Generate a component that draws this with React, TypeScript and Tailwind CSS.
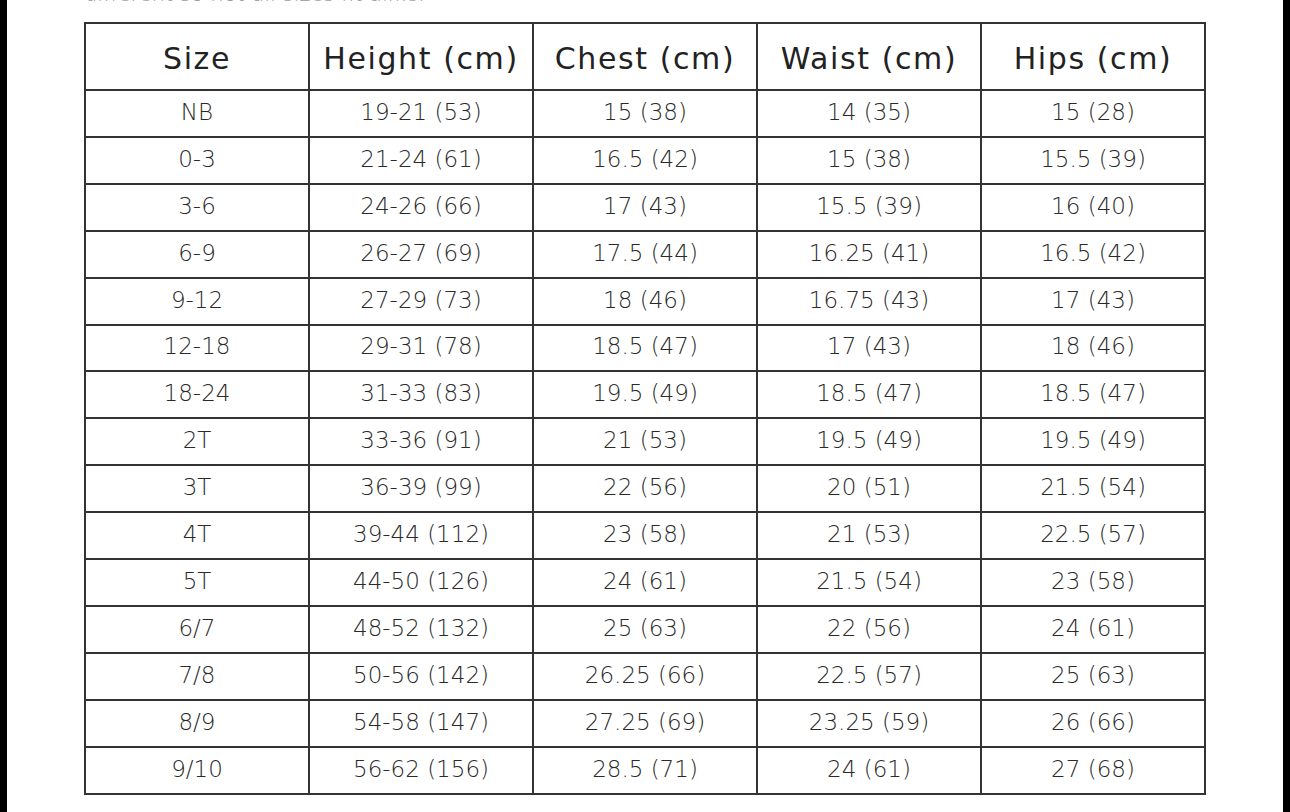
import React from "react";

const headers = ["Size", "Height (cm)", "Chest (cm)", "Waist (cm)", "Hips (cm)"];
const rows: string[][] = [
  ["NB", "19-21 (53)", "15 (38)", "14 (35)", "15 (28)"],
  ["0-3", "21-24 (61)", "16.5 (42)", "15 (38)", "15.5 (39)"],
  ["3-6", "24-26 (66)", "17 (43)", "15.5 (39)", "16 (40)"],
  ["6-9", "26-27 (69)", "17.5 (44)", "16.25 (41)", "16.5 (42)"],
  ["9-12", "27-29 (73)", "18 (46)", "16.75 (43)", "17 (43)"],
  ["12-18", "29-31 (78)", "18.5 (47)", "17 (43)", "18 (46)"],
  ["18-24", "31-33 (83)", "19.5 (49)", "18.5 (47)", "18.5 (47)"],
  ["2T", "33-36 (91)", "21 (53)", "19.5 (49)", "19.5 (49)"],
  ["3T", "36-39 (99)", "22 (56)", "20 (51)", "21.5 (54)"],
  ["4T", "39-44 (112)", "23 (58)", "21 (53)", "22.5 (57)"],
  ["5T", "44-50 (126)", "24 (61)", "21.5 (54)", "23 (58)"],
  ["6/7", "48-52 (132)", "25 (63)", "22 (56)", "24 (61)"],
  ["7/8", "50-56 (142)", "26.25 (66)", "22.5 (57)", "25 (63)"],
  ["8/9", "54-58 (147)", "27.25 (69)", "23.25 (59)", "26 (66)"],
  ["9/10", "56-62 (156)", "28.5 (71)", "24 (61)", "27 (68)"],
];

export default function App() {
  return (
    <div
      className="w-[1290px] h-[812px] bg-[#000000] flex overflow-hidden"
      style={{ fontFamily: '"DejaVu Sans", "Open Sans", sans-serif' }}
    >
      <div className="w-[7px] h-[812px] shrink-0 bg-[#000000]" />
      <div className="w-[1276px] h-[812px] shrink-0 bg-white pl-[77px] flex flex-col">
        <div className="h-[22px] relative overflow-hidden">
          <div className="absolute left-0 top-[-21px] text-[21px] leading-[30px] text-[#9a9a9a] whitespace-nowrap font-extralight">
            different so not all sizes fit alike.
          </div>
        </div>
        <table className="w-[1122px] border-collapse border-2 border-[#333] table-fixed">
          <thead>
            <tr className="h-[67px]">
              {headers.map((h) => (
                <th
                  key={h}
                  className="border-2 border-[#333] text-[30px] leading-[36px] tracking-[1.6px] font-normal text-[#222] text-center p-0 pt-[4px] align-middle"
                >
                  {h}
                </th>
              ))}
            </tr>
          </thead>
          <tbody>
            {rows.map((r, i) => (
              <tr key={i} className={i % 2 === 0 ? "h-[47px]" : "h-[46.8px]"}>
                {r.map((c, j) => (
                  <td
                    key={j}
                    className="border-2 border-[#333] text-[23px] leading-[28px] font-extralight text-[#2a2a2a] text-center p-0 pb-[3px] align-middle"
                  >
                    {c}
                  </td>
                ))}
              </tr>
            ))}
          </tbody>
        </table>
      </div>
      <div className="w-[7px] h-[812px] shrink-0 bg-[#000000]" />
    </div>
  );
}
